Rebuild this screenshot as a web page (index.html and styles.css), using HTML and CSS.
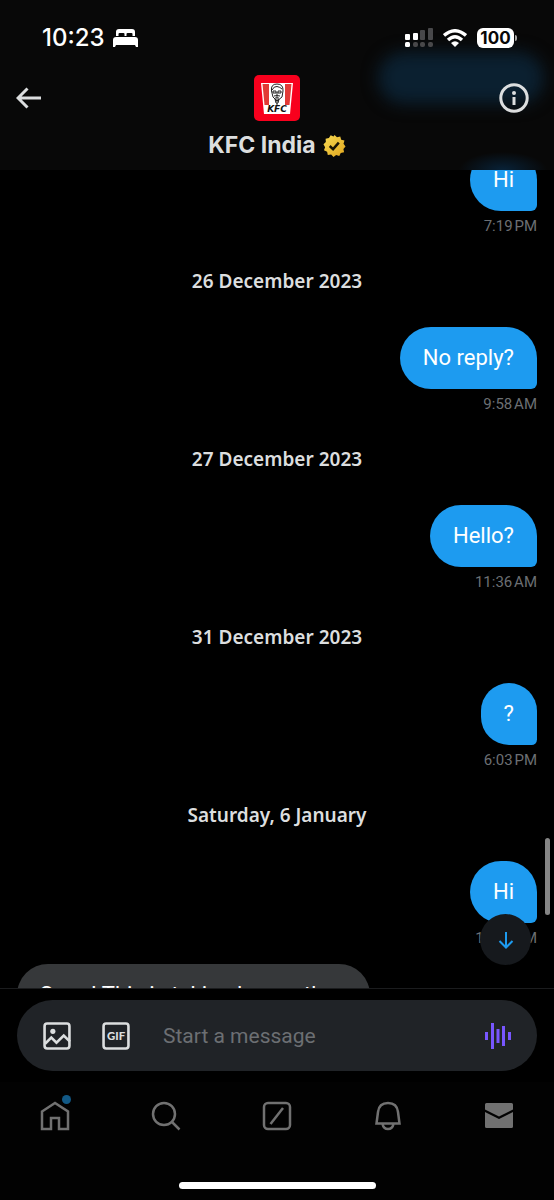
FILE: index.html
```html
<!DOCTYPE html>
<html lang="en">
<head>
<meta charset="utf-8">
<meta name="viewport" content="width=device-width, initial-scale=1">
<title>KFC India</title>
<link rel="stylesheet" href="styles.css">
</head>
<body>
<div class="app">
  <header class="header">
    <div class="status">
      <div class="status-side">
        <time class="clock">10:23</time>
        <svg class="bed" viewBox="0 0 25 18" aria-hidden="true"><path fill="currentColor" d="M3 7V3q0-3 3-3h13q3 0 3 3v4h-2.500V5q0-1-1-1h-4q-1 0-1 1v2h-2V5q0-1-1-1h-4q-1 0-1 1v2zM3 8h19q3 0 3 3v7h-2l-1-2H3l-1 2H0v-7q0-3 3-3z"/></svg>
      </div>
      <div class="status-side">
        <svg class="signal" viewBox="0 0 28 20" aria-hidden="true"><g fill="#fff"><rect y="6" width="5" height="6" rx="1"/><rect x="8" y="5" width="5" height="7" rx="1"/><rect y="14" width="5" height="5" rx="1.500"/></g><g fill="#48484a"><rect x="15" y="2" width="5" height="10" rx="1"/><rect x="23" width="5" height="12" rx="1"/><rect x="8" y="14" width="5" height="5" rx="2"/><rect x="15" y="14" width="5" height="5" rx="2"/><rect x="23" y="14" width="5" height="5" rx="2"/></g></svg>
        <svg class="wifi" viewBox="0 0 24 18" aria-hidden="true"><g fill="none" stroke="#fff" stroke-width="3.400"><path d="M1 6.500Q12-3 23 6.500M5 11q7-6.500 14 0"/></g><path fill="#fff" d="M8 14q4-3.500 8 0l-4 4z"/></svg>
        <span class="battery">100</span>
      </div>
    </div>
    <div class="title-row">
      <button class="icon-button" aria-label="Back"><svg viewBox="0 0 26 22" class="back"><path d="M25 11H2M11.500 1.500 2 11l9.500 9.500"/></svg></button>
      <div class="profile">
        <svg class="avatar" viewBox="0 0 46 46" role="img" aria-label="KFC">
          <rect width="46" height="46" rx="5" fill="#f8001d"/>
          <path fill="#fff" d="M7 8h32l-3 31H10z"/>
          <path fill="#e23a36" d="M8.500 9H15v21h-4.500zM37.500 9H31v21h4.500z"/>
          <path fill="#fff" stroke="#222" d="M17.500 16q-1-7 5.500-7t6 7l-1 6-5 4-4-4z"/>
          <path fill="none" stroke="#222" d="M18 15q2-4 5-3.500t5 2.500M19 16h3v2h-3zM24 16h3v2h-3zM23 17v3M20 21q3-1 6 0M22 22h2v4h-2zM21 24l1 4h2l1-4M23 28v2"/>
          <text class="logo-text" x="23" y="37" text-anchor="middle">KFC</text>
        </svg>
        <h1 class="name">KFC India <svg class="badge" viewBox="0 0 24 24" role="img" aria-label="Verified"><defs><linearGradient id="gold" x2="1" y2="1"><stop stop-color="#f7da54"/><stop offset="1" stop-color="#e0a51c"/></linearGradient></defs><path fill="url(#gold)" d="m12 1 2.600 2.400L18 2.500l1 3.400 3.400 1-1 3.400L23.500 13l-2.200 2.600.7 3.400-3.500.9L17 23l-3.300-1.100L11 24l-2.500-2.500-3.500.4-.7-3.500L1 17l1.200-3.300L.5 10.800 3 8.400l-.3-3.500 3.500-.6L8 1.300l3 1.200z"/><path fill="none" stroke="#191505" stroke-width="2.600" d="m7 12.500 3.500 3.300L16.500 9"/></svg></h1>
      </div>
      <button class="icon-button" aria-label="Conversation info"><svg viewBox="0 0 30 30" class="info"><circle cx="15" cy="15" r="13.200"/><path d="M15 14v8"/><circle class="dot" cx="15" cy="10" r="2"/></svg></button>
    </div>
  </header>

  <main class="thread">
    <div class="messages">
      <div class="sent"><p class="bubble">Hi</p><time class="time">7:19&#8239;PM</time></div>
      <h2 class="date">26 December 2023</h2>
      <div class="sent"><p class="bubble">No reply?</p><time class="time">9:58&#8239;AM</time></div>
      <h2 class="date">27 December 2023</h2>
      <div class="sent"><p class="bubble">Hello?</p><time class="time">11:36&#8239;AM</time></div>
      <h2 class="date">31 December 2023</h2>
      <div class="sent"><p class="bubble">?</p><time class="time">6:03&#8239;PM</time></div>
      <h2 class="date">Saturday, 6 January</h2>
      <div class="sent"><p class="bubble">Hi</p><time class="time">12:13&#8239;PM</time></div>
      <p class="bubble received">Sorry! This is taking longer than</p>
    </div>
    <span class="scrollbar"></span>
    <button class="jump" aria-label="Jump to latest"><svg viewBox="0 0 16 18"><path d="M8 1v15M1.500 10 8 16.500l6.500-6.500"/></svg></button>
  </main>

  <form class="composer">
    <div class="field">
      <button type="button" class="tool" aria-label="Add photo"><svg viewBox="0 0 27 27"><rect x="1.500" y="1.500" width="24" height="24" rx="2.500"/><path d="m2 21 6-6 5 5 7-7 6 6"/><circle class="dot" cx="9.500" cy="9" r="2.500"/></svg></button>
      <button type="button" class="tool" aria-label="Add GIF"><svg viewBox="0 0 27 27"><rect x="1.500" y="1.500" width="24" height="24" rx="2.500"/><text class="gif-text" x="13.500" y="17.500" text-anchor="middle">GIF</text></svg></button>
      <input class="input" type="text" aria-label="Message" placeholder="Start a message">
      <button type="button" class="voice" aria-label="Record voice message"><svg viewBox="0 0 26 26"><path d="M1.500 9v8M7.500 0v26M13 6v14M18.500 3v20M24.500 9v8"/></svg></button>
    </div>
  </form>

  <nav class="tabs" aria-label="Main">
    <div class="tab-row">
      <a class="tab" href="#home" aria-label="Home"><svg viewBox="0 0 30 30"><path d="M2 10.500 15 2l13 8.500V28h-9V17h-8v11H2z"/></svg><span class="unread"></span></a>
      <a class="tab" href="#search" aria-label="Search"><svg viewBox="0 0 30 30"><circle cx="13" cy="13" r="11"/><path d="m21 21 7.500 7.500"/></svg></a>
      <a class="tab" href="#grok" aria-label="Grok"><svg viewBox="0 0 30 30"><rect x="2" y="2" width="26" height="26" rx="4"/><path d="M8.500 23 21 7"/></svg></a>
      <a class="tab" href="#notifications" aria-label="Notifications"><svg viewBox="0 0 30 30"><path d="M3.500 22.500 5 11Q6 2 15 2t10 9l1.500 11.500zM9.500 23q1 5 5.500 5t5.500-5"/></svg></a>
      <a class="tab" href="#messages" aria-label="Messages"><svg viewBox="0 0 30 30"><path class="solid" d="M2.500 2h25q1.500 0 1.500 1.500v5L15 15.500 1 8.500v-5Q1 2 2.500 2zM1 11l14 7 14-7v14.500q0 1.500-1.500 1.500h-25Q1 27 1 25.500z"/></svg></a>
    </div>
    <span class="home-indicator"></span>
  </nav>
</div>
</body>
</html>
```
FILE: styles.css
```css
* { box-sizing: border-box; }

body {
  margin: 0;
  background: #000;
  color: #dcdedf;
  font-family: Roboto, "Liberation Sans", sans-serif;
}

h1, h2, p { margin: 0; }

button {
  padding: 0;
  border: 0;
  background: none;
  color: inherit;
}

svg { display: block; }

.app {
  display: flex;
  flex-direction: column;
  height: 100vh;
}

.header {
  position: relative;
  overflow: hidden;
  padding: 24px 15px 10px;
  background:
    radial-gradient(ellipse 44px 18px at calc(100% - 51px) 100%, #082238, transparent),
    #080808;
}

/* Glow of a message passing beneath the translucent header. */
.header::before {
  content: "";
  position: absolute;
  top: 52px;
  right: 10px;
  width: 166px;
  height: 52px;
  border-radius: 26px;
  background: #0b2030;
  filter: blur(8px);
}

.status, .title-row { position: relative; }

.status {
  display: flex;
  justify-content: space-between;
  height: 27px;
  padding: 0 25px 0 27px;
  color: #fff;
}

.status-side {
  display: flex;
  align-items: center;
  gap: 8px;
}

.status-side:last-child { gap: 10px; }

.clock {
  font: 500 24px/27px Inter, sans-serif;
}

.bed { width: 25px; height: 18px; }
.signal { width: 28px; height: 20px; }
.wifi { width: 24px; height: 18px; }

.battery {
  position: relative;
  width: 37px;
  border-radius: 6px;
  background: #fff;
  color: #080808;
  font: 700 17px/20px Inter, sans-serif;
  text-align: center;
}

.battery::after {
  content: "";
  position: absolute;
  top: 7px;
  left: 38px;
  width: 2px;
  height: 6px;
  border-radius: 0 2px 2px 0;
  background: #aaa;
}

.title-row {
  display: flex;
  justify-content: space-between;
  align-items: flex-start;
  padding-top: 24px;
}

.icon-button {
  display: flex;
  align-items: center;
  justify-content: flex-start;
  width: 40px;
  height: 46px;
}

.icon-button:last-child {
  justify-content: center;
  width: 30px;
  margin-right: 10px;
}

.back, .info {
  fill: none;
  stroke: #dcdedf;
  stroke-width: 3;
}

.back { width: 26px; height: 22px; margin-left: 1px; }
.info { width: 30px; height: 30px; }
.dot { fill: #dcdedf; stroke: none; }

.profile {
  display: flex;
  flex-direction: column;
  align-items: center;
  gap: 9px;
}

.avatar { width: 46px; height: 46px; }

.logo-text {
  font: italic 700 9px "DejaVu Sans", sans-serif;
  fill: #111;
}

.name {
  display: flex;
  align-items: center;
  gap: 7px;
  font: 700 23px/30px Inter, sans-serif;
}

.badge { width: 23px; height: 23px; }

.thread {
  position: relative;
  flex: 1;
  min-height: 0;
  overflow: hidden;
}

.messages {
  display: flex;
  flex-direction: column;
  margin-top: -21px;
  padding: 0 17px;
}

.sent {
  display: flex;
  flex-direction: column;
  align-items: flex-end;
  gap: 5px;
}

.bubble {
  padding: 17px 23px;
  border-radius: 31px 31px 6px 31px;
  background: #1d9bf0;
  color: #fff;
  font-size: 22px;
  line-height: 28px;
}

.received {
  align-self: flex-start;
  margin-top: 16px;
  border-radius: 31px 31px 31px 6px;
  background: #36383a;
}

.time {
  color: #6c6f73;
  font-size: 15px;
  line-height: 20px;
}

.date {
  margin: 33px 0 34px;
  font: 600 19px/24px "Noto Sans", sans-serif;
  text-align: center;
}

.scrollbar {
  position: absolute;
  right: 4px;
  bottom: 73px;
  width: 5px;
  height: 77px;
  border-radius: 3px;
  background: #858585;
}

.jump {
  position: absolute;
  right: 23px;
  bottom: 23px;
  display: grid;
  place-items: center;
  width: 51px;
  height: 51px;
  border-radius: 50%;
  background: #16191d;
}

.jump svg {
  width: 16px;
  height: 18px;
  fill: none;
  stroke: #1d9bf0;
  stroke-width: 2;
}

.composer {
  padding: 11px 17px;
  border-top: 1px solid #1b1c1e;
}

.field {
  display: flex;
  align-items: center;
  height: 71px;
  padding: 0 26px;
  border-radius: 36px;
  background: #202327;
}

.tool { margin-right: 31px; }

.tool svg {
  width: 28px;
  height: 28px;
  fill: none;
  stroke: #dcdedf;
  stroke-width: 2.5;
}

.tool .dot { stroke: none; }

.tool .gif-text {
  font: 900 11px Lato, sans-serif;
  fill: #dcdedf;
  stroke: none;
}

.input {
  flex: 1;
  min-width: 0;
  padding: 0 2px;
  border: 0;
  outline: 0;
  background: none;
  color: #dcdedf;
  font: 400 21px/28px Roboto, sans-serif;
}

.input::placeholder { color: #6c6f73; opacity: 1; }

.voice svg {
  width: 26px;
  height: 26px;
  stroke: #7856ff;
  stroke-width: 3;
}

.tabs {
  display: flex;
  flex-direction: column;
  align-items: center;
  padding: 19px 0 11px;
  background: #020202;
}

.tab-row {
  display: flex;
  align-self: stretch;
  margin-bottom: 51px;
}

.tab {
  position: relative;
  display: flex;
  justify-content: center;
  flex: 1;
}

.tab svg {
  width: 30px;
  height: 30px;
  fill: none;
  stroke: #717171;
  stroke-width: 2.5;
}

.tab .solid { fill: #717171; stroke: none; }

.unread {
  position: absolute;
  top: -6px;
  left: calc(50% + 7px);
  width: 9px;
  height: 9px;
  border-radius: 50%;
  background: #125986;
}

.home-indicator {
  width: 197px;
  height: 7px;
  border-radius: 4px;
  background: #fff;
}
```
